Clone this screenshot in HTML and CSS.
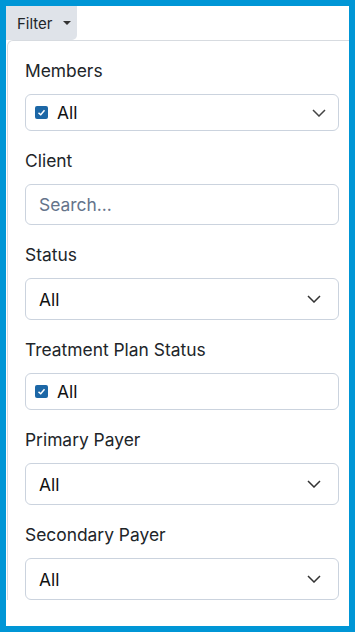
FILE: index.html
```html
<!DOCTYPE html>
<html lang="en">
<head>
    <meta charset="UTF-8">
    <meta name="viewport" content="width=device-width, initial-scale=1.0">
    <title>Filter</title>
    <link rel="stylesheet" href="styles.css">
</head>
<body>
    <div class="frame">
        <button class="filter-btn">Filter <span class="caret"></span></button>

        <div class="panel">
            <div class="field">
                <div class="label">Members</div>
                <div class="control multi">
                    <span class="check"><svg viewBox="0 0 12 12" width="9" height="9"><polyline points="2,6.5 5,9 10,3" fill="none" stroke="#fff" stroke-width="2"/></svg></span>
                    <span class="value">All</span>
                    <svg class="chevron" viewBox="0 0 14 8" width="14" height="8"><polyline points="1,1 7,7 13,1" fill="none" stroke="#444" stroke-width="1.5"/></svg>
                </div>
            </div>

            <div class="field">
                <div class="label">Client</div>
                <div class="control text">
                    <span class="placeholder">Search...</span>
                </div>
            </div>

            <div class="field">
                <div class="label">Status</div>
                <div class="control select">
                    <span class="value">All</span>
                    <svg class="chevron" viewBox="0 0 14 8" width="14" height="8"><polyline points="1,1 7,7 13,1" fill="none" stroke="#333" stroke-width="1.5"/></svg>
                </div>
            </div>

            <div class="field">
                <div class="label">Treatment Plan Status</div>
                <div class="control multi">
                    <span class="check"><svg viewBox="0 0 12 12" width="9" height="9"><polyline points="2,6.5 5,9 10,3" fill="none" stroke="#fff" stroke-width="2"/></svg></span>
                    <span class="value">All</span>
                </div>
            </div>

            <div class="field">
                <div class="label">Primary Payer</div>
                <div class="control select">
                    <span class="value">All</span>
                    <svg class="chevron" viewBox="0 0 14 8" width="14" height="8"><polyline points="1,1 7,7 13,1" fill="none" stroke="#333" stroke-width="1.5"/></svg>
                </div>
            </div>

            <div class="field">
                <div class="label">Secondary Payer</div>
                <div class="control select">
                    <span class="value">All</span>
                    <svg class="chevron" viewBox="0 0 14 8" width="14" height="8"><polyline points="1,1 7,7 13,1" fill="none" stroke="#333" stroke-width="1.5"/></svg>
                </div>
            </div>
        </div>
    </div>
</body>
</html>
```

FILE: styles.css
```css
body {
    margin: 0;
    font-family: Inter, "Noto Sans", sans-serif;
    color: #212529;
}

.frame {
    box-sizing: border-box;
    width: 355px;
    height: 632px;
    border: 6px solid #0096d6;
    background: #fff;
    overflow: hidden;
}

.filter-btn {
    display: flex;
    align-items: center;
    gap: 10px;
    height: 34px;
    width: 71px;
    margin: 0;
    padding: 0 0 0 11px;
    border: none;
    border-radius: 0 0 5px 0;
    background: #dfe3e9;
    font-family: inherit;
    font-size: 15px;
    color: #212529;
}

.caret {
    width: 0;
    height: 0;
    border-left: 4px solid transparent;
    border-right: 4px solid transparent;
    border-top: 4px solid #333;
}

.panel {
    width: 350px;
    box-sizing: border-box;
    margin-left: 1px;
    padding: 18px 17px 0 17px;
    border: 1px solid #d7dbe0;
    border-bottom: none;
    border-radius: 6px 6px 0 0;
}

.field {
    margin-bottom: 18px;
}

.label {
    font-size: 17.4px;
    line-height: 24px;
    margin-bottom: 11px;
}

.control {
    display: flex;
    align-items: center;
    box-sizing: border-box;
    border: 1px solid #cbd3de;
    border-radius: 6px;
    font-size: 17.4px;
    color: #111;
}

.multi {
    height: 37px;
    padding: 0 12px 0 9px;
}

.text {
    height: 41px;
    padding: 0 13px;
}

.select {
    height: 42px;
    padding: 0 17px 0 13px;
}

.check {
    display: flex;
    align-items: center;
    justify-content: center;
    width: 13px;
    height: 13px;
    border-radius: 2px;
    background: #1c67a6;
    margin-right: 9px;
}

.value {
    flex: 1;
}

.placeholder {
    color: #64748b;
}

.chevron {
    flex: none;
}
```
